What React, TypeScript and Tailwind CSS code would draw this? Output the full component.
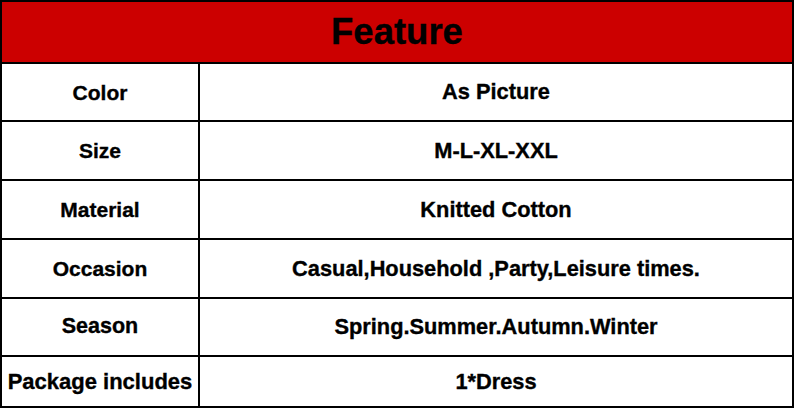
export default function App() {
  const rows: [string, string, string, string][] = [
    ["Color", "As Picture", "h-[56px]", "text-[21px]"],
    ["Size", "M-L-XL-XXL", "h-[57px]", "text-[21px]"],
    ["Material", "Knitted Cotton", "h-[57px]", "text-[21px]"],
    ["Occasion", "Casual,Household ,Party,Leisure times.", "h-[57px]", "text-[21px]"],
    ["Season", "Spring.Summer.Autumn.Winter", "h-[56px]", "text-[21.5px]"],
    ["Package includes", "1*Dress", "h-[49px]", "text-[22px]"],
  ];
  return (
    <div
      className="w-[794px] h-[408px] bg-white text-black [-webkit-text-stroke:0.35px_black]"
      style={{ fontFamily: '"Liberation Sans", Arial, sans-serif' }}
    >
      <div className="w-full h-full border-2 border-black flex flex-col">
        <div className="h-[62px] bg-[#cc0000] flex items-center justify-center border-b-2 border-black">
          <span className="text-[36.5px] font-bold leading-none">Feature</span>
        </div>
        {rows.map(([k, v, h, ks], i) => (
          <div
            key={k}
            className={`flex ${i < rows.length - 1 ? "border-b-2 border-black" : ""}`}
          >
            <div
              className={`w-[198px] ${h} border-r-2 border-black flex items-center justify-center ${ks} font-bold leading-none whitespace-nowrap`}
            >
              {k}
            </div>
            <div
              className={`flex-1 ${h} flex items-center justify-center text-[21.8px] font-bold leading-none whitespace-nowrap`}
            >
              {v}
            </div>
          </div>
        ))}
      </div>
    </div>
  );
}
